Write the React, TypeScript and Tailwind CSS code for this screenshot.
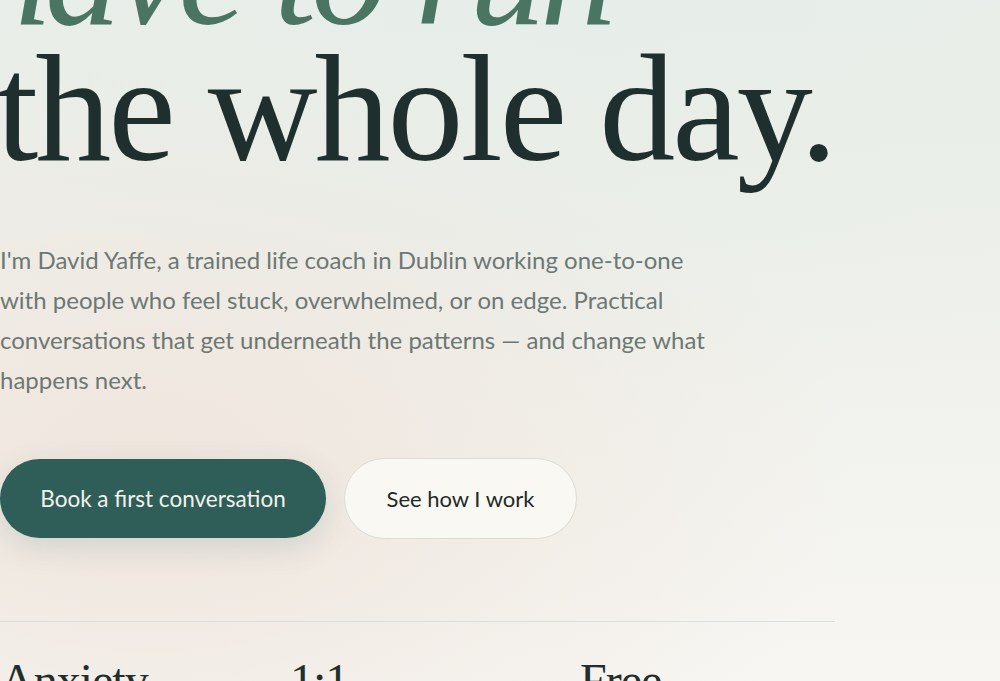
import React from "react";

export default function App() {
  return (
    <div className="relative w-[1000px] h-[681px] overflow-hidden bg-[#f4f2ed]">
      <div className="absolute inset-0 bg-[radial-gradient(ellipse_70%_60%_at_15%_70%,#efe5dd_0%,rgba(239,229,221,0)_100%),radial-gradient(ellipse_90%_60%_at_60%_0%,#e7ede8_0%,rgba(231,237,232,0)_100%),linear-gradient(180deg,#e9eee9_0%,#f0f1ec_50%,#f7f6f2_100%)]" />
      <div className="relative flex flex-col">
        <h1 className="mt-[-95px] font-['Liberation_Serif',serif] text-[152px] leading-[136px] tracking-[-4px] text-[#1f2f2d]">
          <span className="block italic text-[#4a7562] ml-[-26px] tracking-[-5px]">have to run</span>
          <span className="block ml-[-4px] tracking-[-3px]">the whole day.</span>
        </h1>
        <p className="mt-[63px] w-[725px] font-['Lato',sans-serif] text-[24px] leading-[40px] text-[#6c7874]">
          I'm David Yaffe, a trained life coach in Dublin working one-to-one with people who feel stuck, overwhelmed, or on edge. Practical conversations that get underneath the patterns — and change what happens next.
        </p>
        <div className="mt-[58px] flex items-center gap-[18px]">
          <button className="h-[79px] w-[326px] rounded-full bg-[#2f5d58] font-['Lato',sans-serif] text-[22.5px] text-[#f3f1ec] shadow-[0_10px_30px_rgba(47,93,88,0.15)]">
            Book a first conversation
          </button>
          <button className="h-[81px] w-[233px] rounded-full border border-[#dcdcd6] bg-[#faf8f3] font-['Lato',sans-serif] text-[22px] text-[#1e2a28]">
            See how I work
          </button>
        </div>
        <div className="mt-[82px] h-px w-[835px] bg-[#d9dfdc]" />
        <div className="mt-[31px] grid w-[835px] grid-cols-3 gap-[35px] font-['Liberation_Serif',serif] text-[48px] leading-[56px] tracking-[-1px] text-[#1f2f2d]">
          <div>Anxiety</div>
          <div>1:1</div>
          <div>Free</div>
        </div>
      </div>
    </div>
  );
}
